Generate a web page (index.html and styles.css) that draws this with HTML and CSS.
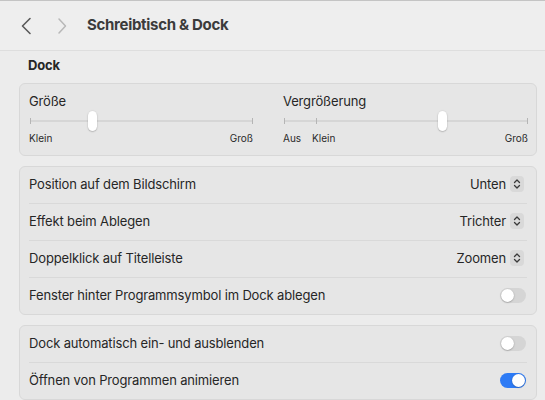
FILE: index.html
```html
<!DOCTYPE html>
<html lang="de">
<head>
<meta charset="utf-8">
<link rel="stylesheet" href="styles.css">
</head>
<body>
<div class="window">
  <header class="toolbar">
    <span class="nav back"><svg width="12" height="18" viewBox="0 0 12 18"><path d="M10 1.5 L2.5 9 L10 16.5" fill="none" stroke="#5a5a5a" stroke-width="1.6" stroke-linecap="round" stroke-linejoin="round"/></svg></span>
    <span class="nav fwd"><svg width="10" height="18" viewBox="0 0 10 18"><path d="M2 2 L8.5 9 L2 16" fill="none" stroke="#b8b8b8" stroke-width="1.5" stroke-linecap="round" stroke-linejoin="round"/></svg></span>
    <h1 class="title">Schreibtisch &amp; Dock</h1>
  </header>
  <main class="content">
    <h2 class="section">Dock</h2>
    <section class="panel sliders">
      <div class="slider s-left">
        <div class="s-label">Größe</div>
        <div class="track">
          <span class="tick t-start"></span>
          <span class="tick t-end"></span>
          <span class="thumb" style="left:58px"></span>
        </div>
        <div class="s-scale"><span>Klein</span><span>Groß</span></div>
      </div>
      <div class="slider s-right">
        <div class="s-label">Vergrößerung</div>
        <div class="track">
          <span class="tick t-start"></span>
          <span class="tick t-mid" style="left:32px"></span>
          <span class="tick t-end"></span>
          <span class="thumb" style="left:154px"></span>
        </div>
        <div class="s-scale"><span class="aus">Aus</span><span class="klein">Klein</span><span class="gross">Groß</span></div>
      </div>
    </section>

    <section class="panel list">
      <div class="row"><span>Position auf dem Bildschirm</span><span class="popup">Unten <i class="stepper"><svg width="8" height="12" viewBox="0 0 8 12"><path d="M1.5 4.5 L4 2 L6.5 4.5 M1.5 7.5 L4 10 L6.5 7.5" fill="none" stroke="#3a3a3a" stroke-width="1.3" stroke-linecap="round" stroke-linejoin="round"/></svg></i></span></div>
      <div class="row"><span>Effekt beim Ablegen</span><span class="popup">Trichter <i class="stepper"><svg width="8" height="12" viewBox="0 0 8 12"><path d="M1.5 4.5 L4 2 L6.5 4.5 M1.5 7.5 L4 10 L6.5 7.5" fill="none" stroke="#3a3a3a" stroke-width="1.3" stroke-linecap="round" stroke-linejoin="round"/></svg></i></span></div>
      <div class="row"><span>Doppelklick auf Titelleiste</span><span class="popup">Zoomen <i class="stepper"><svg width="8" height="12" viewBox="0 0 8 12"><path d="M1.5 4.5 L4 2 L6.5 4.5 M1.5 7.5 L4 10 L6.5 7.5" fill="none" stroke="#3a3a3a" stroke-width="1.3" stroke-linecap="round" stroke-linejoin="round"/></svg></i></span></div>
      <div class="row"><span>Fenster hinter Programmsymbol im Dock ablegen</span><span class="toggle"></span></div>
    </section>

    <section class="panel list">
      <div class="row"><span>Dock automatisch ein- und ausblenden</span><span class="toggle"></span></div>
      <div class="row"><span>Öffnen von Programmen animieren</span><span class="toggle on"></span></div>
    </section>
  </main>
</div>
</body>
</html>
```

FILE: styles.css
```css
* { box-sizing: border-box; }
html, body { margin: 0; padding: 0; }
body {
  width: 545px;
  height: 400px;
  overflow: hidden;
  background: #ececec;
  font-family: Inter, "Liberation Sans", sans-serif;
  color: #262626;
  font-size: 13px;
  letter-spacing: -0.15px;
}
.window {
  border-top: 1px solid #c4c4c4;
}
.toolbar {
  height: 50px;
  display: flex;
  align-items: center;
  padding-left: 20px;
  border-bottom: 1px solid #dedede;
  background: #eeeeee;
}
.nav { display: flex; align-items: center; }
.back { margin-right: 25px; }
.fwd { margin-right: 20px; }
.title {
  margin: 0 0 2px 0;
  font-size: 15px;
  font-weight: 700;
  color: #3b3b3b;
  letter-spacing: -0.3px;
}
.content {
  padding: 0 8px 0 19px;
}
.section {
  margin: 6px 0 0 9px;
  height: 26px;
  font-size: 13px;
  font-weight: 700;
  color: #262626;
  line-height: 16px;
}
.panel {
  background: #e6e6e6;
  border: 1px solid #d8d8d8;
  border-radius: 6px;
}
.sliders {
  height: 73px;
  display: grid;
  grid-template-columns: 224px 245px;
  column-gap: 30px;
  padding: 9px 9px 0 9px;
}
.s-label { line-height: 16px; height: 17px; }
.track {
  position: relative;
  height: 22px;
  margin-left: 1px;
}
.track::before {
  content: "";
  position: absolute;
  left: 0; right: 0; top: 10px;
  height: 2px;
  border-radius: 1px;
  background: #d6d6d6;
}
.tick {
  position: absolute;
  top: 8px;
  width: 1px;
  height: 6px;
  background: #b5b5b5;
}
.t-start { left: 0; }
.t-end { right: 0; }
.thumb {
  position: absolute;
  top: 1px;
  width: 9px;
  height: 20px;
  border-radius: 5px;
  background: #ffffff;
  box-shadow: 0 0.5px 1.5px rgba(0,0,0,0.35);
}
.s-scale {
  display: flex;
  justify-content: space-between;
  font-size: 10px;
  line-height: 13px;
  color: #2a2a2a;
  letter-spacing: 0;
}
.s-right .s-scale { justify-content: flex-start; }
.s-right .klein { margin-left: 11px; }
.s-right .gross { margin-left: auto; }

.list { margin-top: 10px; }
.row {
  height: 37px;
  margin: 0 9px;
  padding-bottom: 2px;
  display: flex;
  align-items: center;
  justify-content: space-between;
  border-top: 1px solid #d9d9d9;
}
.row:first-child { border-top: 0; height: 36px; }
.popup {
  display: flex;
  align-items: center;
  gap: 4px;
  margin-right: 3px;
}
.stepper {
  display: flex;
  align-items: center;
  justify-content: center;
  width: 14px;
  height: 16px;
  border-radius: 4px;
  background: #d9d9d9;
}
.toggle {
  position: relative;
  width: 26px;
  height: 15px;
  border-radius: 8px;
  background: #d5d5d5;
  margin-right: 1px;
}
.toggle::after {
  content: "";
  position: absolute;
  top: 1px; left: 1px;
  width: 13px; height: 13px;
  border-radius: 50%;
  background: #fff;
  box-shadow: 0 0.5px 1.5px rgba(0,0,0,0.35);
}
.toggle.on { background: #2e7bf5; }
.toggle.on::after { left: 12px; }
```
